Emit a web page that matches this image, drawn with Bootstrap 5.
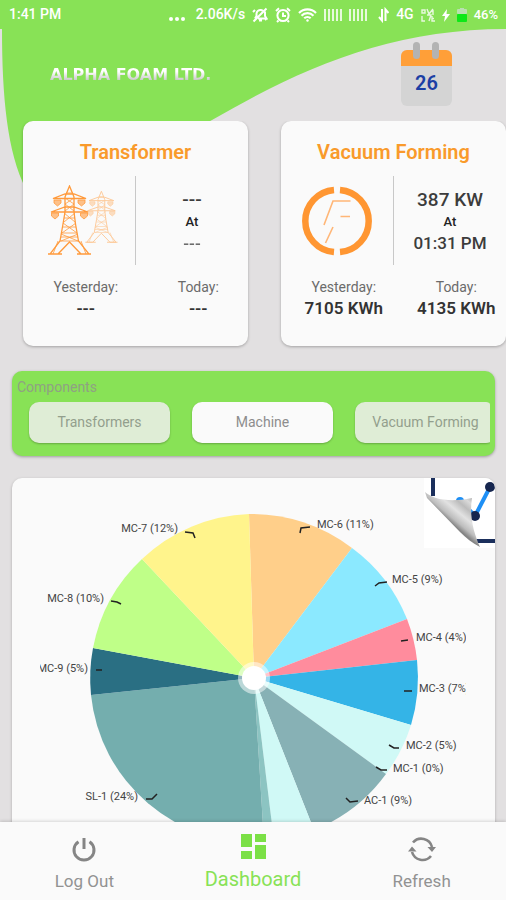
<!DOCTYPE html>
<html lang="en">
<head>
<meta charset="utf-8">
<meta name="viewport" content="width=device-width, initial-scale=1">
<title>Alpha Foam Ltd. Dashboard</title>
<link href="https://cdn.jsdelivr.net/npm/bootstrap@5.3.0/dist/css/bootstrap.min.css" rel="stylesheet">
<style>
  :root { --leaf: #88e256; --amber: #ff9a2e; --sheet: #fafafa; }
  body { font-family: Roboto, "Open Sans", sans-serif; background: #e2e0e1; color: #3c3c3c; }
  svg { display: block; flex-shrink: 0; }
  .status-bar { background: var(--leaf); color: #fff; height: 29px; font-size: 14px; font-weight: 500; padding: 0 8px 0 9px; }
  .status-icons { gap: 7px; }
  .status-icons .percent { font-size: 13px; }
  .scroller { overflow: auto; scrollbar-width: none; }
  .scroller::-webkit-scrollbar { display: none; }
  .backdrop { position: absolute; inset: 0 0 auto 0; width: 100%; z-index: -1; }
  .page-body { isolation: isolate; }
  .top-row { height: 90px; padding: 0 53px 0 50px; margin-bottom: 2px; }
  .brand { font: bold 16px "DejaVu Sans", sans-serif; margin: 0;
    background: linear-gradient(#fff 35%, #bdbdbd 90%); -webkit-background-clip: text; background-clip: text; color: transparent; }
  .meters { gap: 33px; padding: 0 23px 4px; }
  .meter { flex: 0 0 225px; height: 225px; background: var(--sheet); border-radius: 10px; padding-top: 18px; box-shadow: 0 1px 3px rgba(0,0,0,.28); }
  .meter h2 { color: #f99a2b; font-size: 20px; line-height: 26px; font-weight: 600; margin: 0 0 11px; }
  .now-row { height: 89px; }
  .now-row > div { flex: 1 1 0; }
  .reading { border-left: 1px solid #c8c8c8; font-weight: 500; line-height: 22px; }
  .reading .power { font-size: 19px; line-height: 22px; }
  .reading .when { font-size: 13px; color: #222; }
  .reading .clock { font-size: 17px; line-height: 20px; }
  .totals { margin-top: 13px; }
  .totals > div { flex: 1 1 0; padding-left: 13px; white-space: nowrap; }
  .totals dt { font-size: 14px; line-height: 18px; font-weight: 400; color: #6b6b6b; }
  .totals dd { font-size: 17px; line-height: 24px; font-weight: 600; margin: 0; color: #333; }
  .components { background: var(--leaf); border-radius: 10px; margin: 21px 11px 0 12px; padding: 7px 5px 5px; box-shadow: 0 1px 3px rgba(0,0,0,.3); }
  .components h3 { font-size: 14px; line-height: 18px; font-weight: 400; color: #8fa183; margin: 0 0 6px; }
  .chips { gap: 22px; padding: 0 0 8px 12px; border-radius: 3px; }
  .chip { flex: 0 0 141px; height: 41px; border: 0; border-radius: 10px; font-size: 14px; color: #939f8d; background: #dfedd6; box-shadow: 0 1px 2px rgba(0,0,0,.25); white-space: nowrap; padding: 0; }
  .chip.active { background: var(--sheet); color: #8d8d8d; }
  .chart-card { background: var(--sheet); border-radius: 10px; margin: 22px 11px 12px 12px; box-shadow: 0 1px 3px rgba(0,0,0,.25); overflow: hidden; }
  .pie { width: 100%; height: auto; }
  .pie text { font-size: 11px; fill: #444; }
  .turn-page { position: absolute; top: 0; right: 0; border: 0; padding: 0; background: none; }
  .bottom-bar { background: var(--sheet); height: 78px; box-shadow: 0 -1px 3px rgba(0,0,0,.15); z-index: 1; }
  .bottom-bar a { flex: 1 1 0; color: #929292; font-size: 17px; line-height: 26px; text-decoration: none; padding-top: 12px; }
  .bottom-bar a svg { margin-bottom: 4px; }
  .bottom-bar a.active { color: var(--leaf); font-size: 20px; padding-top: 10px; }
</style>
<script src="https://cdn.jsdelivr.net/npm/bootstrap@5.3.0/dist/js/bootstrap.bundle.min.js"></script>
</head>
<body class="d-flex flex-column vh-100 overflow-hidden">

<div class="status-bar d-flex align-items-center justify-content-between flex-shrink-0">
  <span>1:41 PM</span>
  <div class="status-icons d-flex align-items-center">
    <svg width="21" height="16" fill="#fff" aria-hidden="true"><circle cx="3" cy="12" r="2"/><circle cx="9" cy="12" r="2"/><circle cx="15" cy="12" r="2"/></svg>
    <span>2.06K/s</span>
    <!-- muted bell -->
    <svg width="16" height="16" viewBox="0 0 16 16" fill="none" stroke="#fff" stroke-width="2" aria-hidden="true"><path d="M3 11.500 4.500 9V6.500A4 4 0 0 1 9 3l2 .7M13 4.500V9l1.500 2.500H6M7 13.500h3M1.500 14.500 14.500 1.500M1 5l2-2M15 11l-2 2"/></svg>
    <!-- alarm clock -->
    <svg width="16" height="16" viewBox="0 0 16 16" fill="none" stroke="#fff" stroke-width="2" aria-hidden="true"><circle cx="8" cy="8.500" r="5.600"/><path d="M8 5.500V9h3M1 4l3-2.700M15 4l-3-2.700M3.500 13.500 2 15M12.500 13.500 14 15"/></svg>
    <!-- wifi -->
    <svg width="19" height="16" viewBox="0 0 19 16" fill="none" stroke="#fff" stroke-width="2.200" aria-hidden="true"><path d="M1 6a12 12 0 0 1 17 0M3.500 8.700a8.500 8.500 0 0 1 12 0M6.200 11.300a4.700 4.700 0 0 1 6.500 0"/><circle cx="9.500" cy="13.500" r="1.200" fill="#fff" stroke="none"/></svg>
    <svg width="18" height="16" stroke="#fff" stroke-width="2" stroke-opacity=".8" aria-hidden="true"><path d="M1 2v12M5 2v12M9 2v12M13 2v12M17 2v12"/></svg>
    <svg class="me-1" width="18" height="16" stroke="#fff" stroke-width="2" stroke-opacity=".8" aria-hidden="true"><path d="M1 2v12M5 2v12M9 2v12M13 2v12M17 2v12"/></svg>
    <!-- data up and down -->
    <svg width="11" height="16" fill="none" stroke="#fff" stroke-width="2" aria-hidden="true"><path d="M4 2v11.500L1 10M7.500 14V2.500L10.500 6"/></svg>
    <span>4G</span>
    <!-- voice over LTE -->
    <svg width="14" height="16" viewBox="0 0 14 16" fill="none" stroke="#fff" stroke-width="1.400" stroke-opacity=".8" aria-hidden="true"><path d="M1 3h3v3H1zM6 2l2 5 4-5M12 3v5M1 9v5h3M6 8h4l-2 6M11 9v5h3M11 11.500h2"/></svg>
    <svg width="8" height="16" fill="#fff" aria-hidden="true"><path d="M5 2 0 9h3l-1 6 6-8H4.500z"/></svg>
    <svg width="10" height="16" aria-hidden="true"><rect x="3" y="1" width="4" height="2" fill="#b9dfb0"/><rect y="2" width="10" height="5" rx="1" fill="#b9dfb0"/><rect y="7" width="10" height="8" rx="1" fill="#0de818"/></svg>
    <span class="percent">46%</span>
  </div>
</div>

<main class="page-body scroller position-relative flex-grow-1">
  <svg class="backdrop" height="170" viewBox="0 0 506 170" preserveAspectRatio="none" aria-hidden="true"><path fill="#88e256" d="M2 0C2 66 7 124 26 160C80 170 140 130 212 91C300 40 390 0 506 0Z"/></svg>

  <header class="top-row d-flex align-items-center justify-content-between">
    <h1 class="brand">ALPHA FOAM LTD.</h1>
    <button type="button" class="btn p-0 border-0" aria-label="Choose date">
      <svg width="53" height="65" viewBox="0 0 53 65">
        <rect x="1" y="8" width="51" height="56" rx="6" fill="#d4d4d4"/>
        <path d="M1 24V14a6 6 0 0 1 6-6h39a6 6 0 0 1 6 6v10z" fill="#ff9f38"/>
        <rect x="13" y="0" width="7" height="17" rx="3.500" fill="#b3b3b3"/><rect x="32" y="0" width="7" height="17" rx="3.500" fill="#b3b3b3"/>
        <text x="26.500" y="48" text-anchor="middle" font-size="20" font-weight="600" fill="#1c3fa4">26</text>
      </svg>
    </button>
  </header>

  <section class="meters scroller d-flex">
    <article class="meter text-center">
      <h2>Transformer</h2>
      <div class="now-row d-flex">
        <div class="d-flex align-items-center justify-content-center">
          <svg width="80" height="72" viewBox="0 0 80 72" fill="none" stroke="#ff9a3c" aria-hidden="true">
            <defs>
              <g id="pylon">
                <path stroke-width="1.300" d="M30.500 1 26 12v15l-2 12-3 17L11 69h8l11.500-12L42 69h8L39.500 56l-3-17L35 27V12zM14 13.500 26 9h9l12 4.500zM12 27l14-5h9l14 5zM9 69h14M38 69h14"/>
                <path stroke-width=".8" d="M27 8h7M26 13l9 6M35 13l-9 6M26 19l9 7M35 19l-9 7M25 28l11 9M36 28l-11 9M24 38l14 10M37 38 23 48M22 49l17 7M39 49l-17 7M22 52h17M21 56h19M23 48h15M24 42h13M25 33h11M19 56 14 69M42 56l5 13"/>
                <path fill="#ff9a3c" fill-opacity=".6" stroke-width=".8" d="M15 15h7v3l-3.500 3-3.500-3zM39 15h7v3l-3.500 3-3.500-3zM12.500 28h7v3L16 34l-3.500-3zM41.500 28h7v3L45 34l-3.500-3z"/>
              </g>
            </defs>
            <use href="#pylon"/>
            <use href="#pylon" transform="translate(39.500 5.500) scale(.75)" opacity=".5"/>
          </svg>
        </div>
        <div class="reading d-flex flex-column justify-content-center">
          <span class="power">---</span><span class="when">At</span><span class="clock opacity-75">---</span>
        </div>
      </div>
      <dl class="totals d-flex mb-0">
        <div><dt>Yesterday:</dt><dd>---</dd></div>
        <div><dt>Today:</dt><dd>---</dd></div>
      </dl>
    </article>

    <article class="meter text-center">
      <h2>Vacuum Forming</h2>
      <div class="now-row d-flex">
        <div class="d-flex align-items-center justify-content-center">
          <svg width="70" height="70" viewBox="0 0 70 70" fill="none" stroke="#ff9632" aria-hidden="true">
            <path stroke-width="6.500" d="M32 3.900a31.200 31.200 0 0 0 0 62.200M38 3.900a31.200 31.200 0 0 1 0 62.200"/>
            <path stroke-width="1.600" stroke="#ffb677" d="M22 39 31 15H48.500M38.500 30.500H48M31 41 23.500 57"/>
          </svg>
        </div>
        <div class="reading d-flex flex-column justify-content-center">
          <span class="power">387 KW</span><span class="when">At</span><span class="clock">01:31 PM</span>
        </div>
      </div>
      <dl class="totals d-flex mb-0">
        <div><dt>Yesterday:</dt><dd>7105 KWh</dd></div>
        <div><dt>Today:</dt><dd>4135 KWh</dd></div>
      </dl>
    </article>
  </section>

  <section class="components">
    <h3>Components</h3>
    <div class="chips scroller d-flex">
      <button type="button" class="chip">Transformers</button>
      <button type="button" class="chip active">Machine</button>
      <button type="button" class="chip">Vacuum Forming</button>
    </div>
  </section>

  <section class="chart-card position-relative">
    <svg class="pie" viewBox="0 0 483 400" role="img" aria-label="Energy share by machine">
      <defs><clipPath id="plot"><rect x="28" y="0" width="426" height="400"/></clipPath></defs>
      <g>
        <path fill="#ffcf8a" d="M242 200 237 36A164 164 0 0 1 340 70z"/>
        <path fill="#8be9ff" d="M242 200 340 70A164 164 0 0 1 395 141z"/>
        <path fill="#ff8c9d" d="M242 200 395 141A164 164 0 0 1 405 182z"/>
        <path fill="#34b4e7" d="M242 200 405 182A164 164 0 0 1 399 247z"/>
        <path fill="#d0f9f6" d="M242 200 399 247A164 164 0 0 1 374 296z"/>
        <path fill="#87b1b5" d="M242 200 374 296A164 164 0 0 1 302 352z"/>
        <path fill="#d0f9f6" d="M242 200 302 352A164 164 0 0 1 262 363z"/>
        <path fill="#8cc4c2" d="M242 200 262 363A164 164 0 0 1 252 364z"/>
        <path fill="#74aeae" d="M242 200 252 364A164 164 0 0 1 79 217z"/>
        <path fill="#2a6f83" d="M242 200 79 217A164 164 0 0 1 81 170z"/>
        <path fill="#bfff88" d="M242 200 81 170A164 164 0 0 1 130 81z"/>
        <path fill="#fff48c" d="M242 200 130 81A164 164 0 0 1 237 36z"/>
      </g>
      <circle cx="242" cy="200" r="16" fill="#fff" fill-opacity=".5"/>
      <circle cx="242" cy="200" r="12" fill="#fff"/>
      <path fill="none" stroke="#222" stroke-width="1.500" d="M288 55l1-5 9-1M363 108l4-3 8-1M389 163l7-1M392 213h8M377 267l5 3h5M364 289l5 3h6M334 320l4 4 8-1M173 54l8 1 2 5M99 123l6 1 4 2M84 192h6M134 321h6l5-5"/>
      <g clip-path="url(#plot)">
        <text x="305" y="50">MC-6 (11%)</text>
        <text x="380" y="105">MC-5 (9%)</text>
        <text x="404" y="163">MC-4 (4%)</text>
        <text x="407" y="214">MC-3 (7%)</text>
        <text x="394" y="271">MC-2 (5%)</text>
        <text x="381" y="294">MC-1 (0%)</text>
        <text x="352" y="326">AC-1 (9%)</text>
        <text x="166" y="54" text-anchor="end">MC-7 (12%)</text>
        <text x="92" y="124" text-anchor="end">MC-8 (10%)</text>
        <text x="76" y="194" text-anchor="end">MC-9 (5%)</text>
        <text x="126" y="322" text-anchor="end">SL-1 (24%)</text>
      </g>
    </svg>
    <button type="button" class="turn-page" aria-label="Show line chart">
      <svg width="71" height="70" viewBox="0 0 71 70">
        <defs>
          <linearGradient id="curl" gradientUnits="userSpaceOnUse" x1="27" y1="45" x2="48" y2="20">
            <stop offset="0" stop-color="#858585"/><stop offset=".15" stop-color="#bdbdbd"/><stop offset=".4" stop-color="#e2e2e2"/><stop offset=".65" stop-color="#bcbcbc"/><stop offset=".85" stop-color="#dadada"/><stop offset="1" stop-color="#b5b5b5"/>
          </linearGradient>
        </defs>
        <path d="M0 0h71v70H0z" fill="#fff"/>
        <path d="M9 0v18M50 63h21" stroke="#1b2f5c" stroke-width="4"/>
        <path d="M36 22 51 38 66 9" fill="none" stroke="#1e8ff5" stroke-width="4"/>
        <circle cx="36" cy="23" r="4" fill="#1e8ff5"/>
        <circle cx="51" cy="38" r="5" fill="#16264f"/><circle cx="66" cy="9" r="5" fill="#16264f"/>
        <path d="M1 14C9 21 25 25 48 20C45 38 50 56 56 69C48 65 42 60 36 54L3 20z" fill="url(#curl)"/>
      </svg>
    </button>
  </section>
</main>

<nav class="bottom-bar d-flex flex-shrink-0 text-center">
  <a href="#logout" class="d-flex flex-column align-items-center">
    <svg width="30" height="30" viewBox="0 0 30 30" fill="none" stroke="#858585" stroke-width="3" aria-hidden="true"><path d="M9.500 7.700a10 10 0 1 0 11 0M15 4v11"/></svg>
    Log Out
  </a>
  <a href="#dashboard" class="active d-flex flex-column align-items-center" aria-current="page">
    <svg width="30" height="30" viewBox="0 0 30 30" fill="#7be046" aria-hidden="true"><path d="M3 2h11v13H3zM17 2h11v8H17zM3 19h11v8H3zM17 13h11v14H17z"/></svg>
    Dashboard
  </a>
  <a href="#refresh" class="d-flex flex-column align-items-center">
    <svg width="30" height="30" viewBox="0 0 30 30" fill="none" stroke="#858585" stroke-width="2.600" aria-hidden="true"><path d="M6 8.500A11 11 0 0 1 25 13M24 22A11 11 0 0 1 5 18"/><path d="M20.500 13h8.500l-4 5zM1 17.500h8.500L5 12.500z" fill="#858585" stroke="none"/></svg>
    Refresh
  </a>
</nav>
</body>
</html>
